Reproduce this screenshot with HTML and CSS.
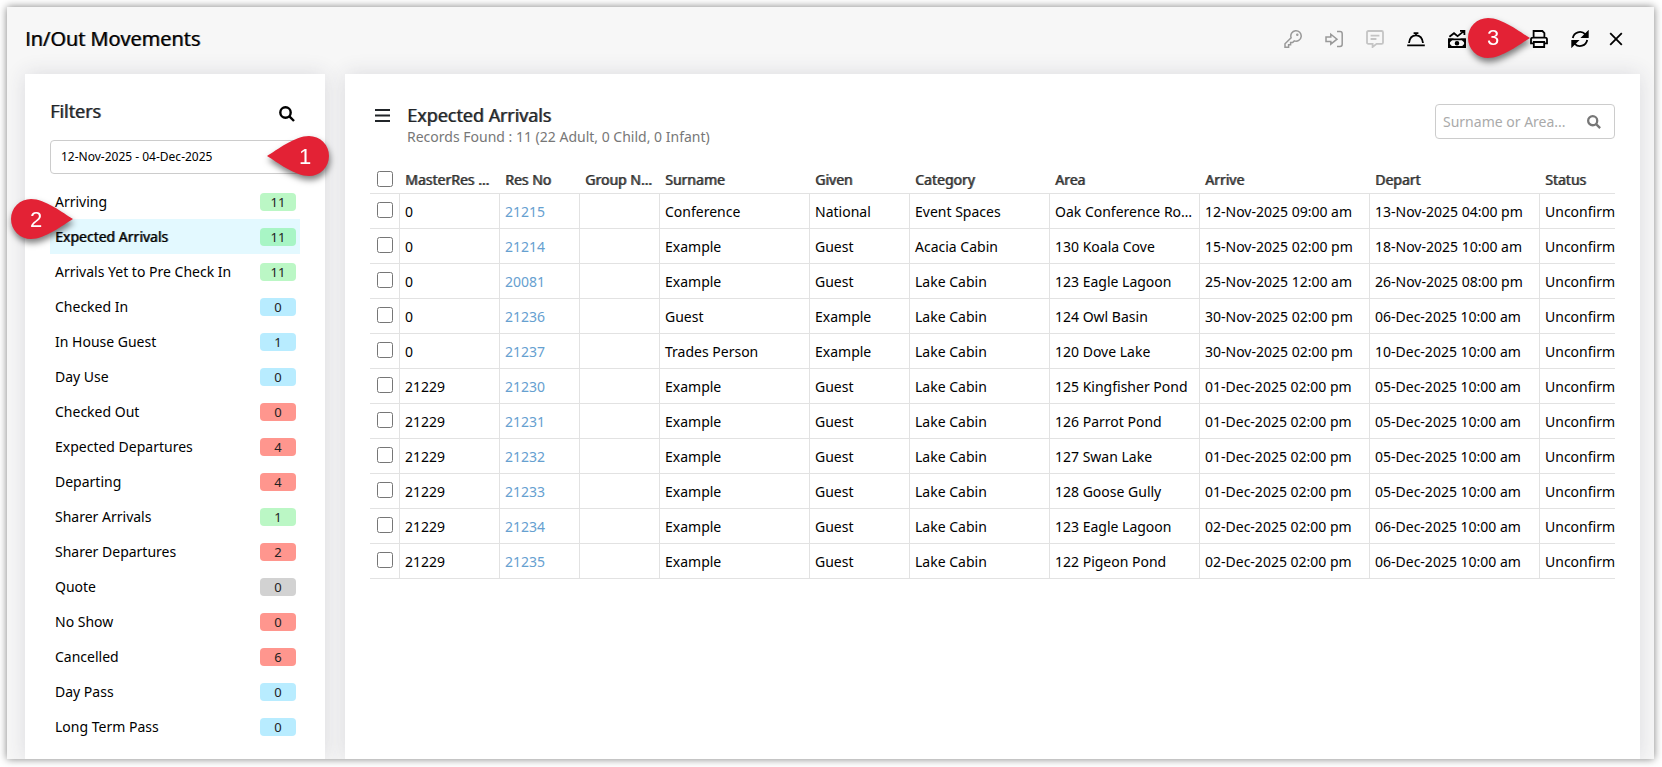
FILE: index.html
```
<!DOCTYPE html>
<html lang="en">
<head>
  <meta charset="UTF-8" />
  <title>In/Out Movements</title>
  <link rel="stylesheet" href="styles.css">
</head>
<body>
  <div class="window">
    <header class="topbar">
      <h1>In/Out Movements</h1>
      <div class="tools">
        <button class="tool off" aria-label="Key">
          <svg viewBox="0 0 18 18"><path d="M7.1 7.7A5.2 5.2 0 1 1 10.3 10.9L8.6 12.6H6.6V14.8H4.6V17.2H1V13.8Z"/><circle class="solid" cx="13.3" cy="4.8" r="0.5"/></svg>
        </button>
        <button class="tool off" aria-label="Check in">
          <svg viewBox="0 0 18 18"><path d="M1 7H5.8V4.2L12 9.2 5.8 14.2V11.4H1ZM12 1.6H15Q17.2 1.6 17.2 3.8V14.2Q17.2 16.4 15 16.4H12"/></svg>
        </button>
        <button class="tool dim" aria-label="Comments">
          <svg viewBox="0 0 18 18"><path d="M2.4 1H15.6Q17 1 17 2.4V12.4Q17 13.8 15.6 13.8H10.6L6.6 17V13.8H2.4Q1 13.8 1 12.4V2.4Q1 1 2.4 1ZM4.6 5.6H13.4M4.6 9H10.4"/></svg>
        </button>
        <button class="tool" aria-label="Concierge">
          <svg viewBox="0 0 18 18"><path d="M0.2 15.4H17.8M2 13C2.6 8.2 5.4 5.4 9 5.4S15.4 8.2 16 13M9 5.4V3.2M6.6 3.2H11.4"/></svg>
        </button>
        <button class="tool" aria-label="Revenue">
          <svg viewBox="0 0 18 18"><path d="M1.4 6.8 6 3.2 9.6 6.2 15.6 1.4M12 0.9H16.4V5M1 9.4H17V17H1Z"/><path class="solid" d="M1 9.4H3.6L1 12ZM17 9.4V12L14.4 9.4ZM1 17V14.4L3.6 17ZM17 17H14.4L17 14.4Z"/><circle class="solid" cx="9" cy="13.2" r="1.4"/></svg>
        </button>
        <button class="tool" aria-label="Export"></button>
        <button class="tool" aria-label="Print">
          <svg viewBox="0 0 18 18"><path d="M3.6 7.4V1H12.4L14.4 3V7.4M3.4 13.4H1V9.4Q1 7.6 2.8 7.6H15.2Q17 7.6 17 9.4V13.4H14.6M3.8 12H14.2V17H3.8Z"/></svg>
        </button>
        <button class="tool" aria-label="Refresh">
          <svg viewBox="0 0 18 18"><path d="M1.8 8A7.3 7.3 0 0 1 14.2 4.2L15.4 5.6M16.2 10A7.3 7.3 0 0 1 3.8 13.8L2.6 12.4"/><path class="solid" d="M16.8 2V7.2H11.6ZM1.2 16V10.8H6.4Z"/></svg>
        </button>
        <button class="tool close" aria-label="Close">
          <svg viewBox="0 0 14 14"><path d="M1.2 1.2 12.8 12.8M12.8 1.2 1.2 12.8"/></svg>
        </button>
      </div>
      <svg class="pin pin-3" viewBox="0 0 62 40"><path d="M62 20C52 14 34 0 20 0A20 20 0 0 0 20 40C34 40 52 26 62 20Z"/><text x="25" y="27">3</text></svg>
    </header>

    <div class="panels">
      <aside class="filters">
        <div class="filters-head">
          <h2>Filters</h2>
          <button class="search-btn" aria-label="Search filters">
            <svg viewBox="0 0 16 16"><circle cx="6.5" cy="6.5" r="5.2"/><path d="M10.4 10.4 15 15"/></svg>
          </button>
        </div>
        <input class="dates" type="text" aria-label="Date range" value="12-Nov-2025 - 04-Dec-2025">
        <ul class="filter-list" id="filterList"></ul>
        <svg class="pin pin-1" viewBox="0 0 62 40"><path d="M0 20C10 14 28 0 42 0A20 20 0 0 1 42 40C28 40 10 26 0 20Z"/><text x="38" y="28">1</text></svg>
        <svg class="pin pin-2" viewBox="0 0 62 40"><path d="M62 20C52 14 34 0 20 0A20 20 0 0 0 20 40C34 40 52 26 62 20Z"/><text x="25" y="28">2</text></svg>
      </aside>

      <main class="content">
        <div class="content-head">
          <button class="menu-btn" aria-label="Menu">
            <svg viewBox="0 0 15 13"><path d="M0 1H15M0 6.5H15M0 12H15"/></svg>
          </button>
          <div class="content-title">
            <h2>Expected Arrivals</h2>
            <p>Records Found : 11 (22 Adult, 0 Child, 0 Infant)</p>
          </div>
          <div class="search">
            <input type="text" aria-label="Surname or Area" placeholder="Surname or Area...">
            <svg viewBox="0 0 16 16"><circle cx="6.5" cy="6.5" r="5.2"/><path d="M10.4 10.4 15 15"/></svg>
          </div>
        </div>

        <div class="table-wrap">
          <table>
            <colgroup>
              <col class="w30"><col class="w100"><col class="w80"><col class="w80"><col class="w150"><col class="w100">
              <col class="w140"><col class="w150"><col class="w170"><col class="w170"><col class="w100">
            </colgroup>
            <thead>
              <tr>
                <th><input type="checkbox" aria-label="Select all"></th>
                <th>MasterRes No</th><th>Res No</th><th>Group Name</th><th>Surname</th><th>Given</th>
                <th>Category</th><th>Area</th><th>Arrive</th><th>Depart</th><th>Status</th>
              </tr>
            </thead>
            <tbody id="rows"></tbody>
          </table>
        </div>
      </main>
    </div>
  </div>

  <script src="script.js"></script>
</body>
</html>
```
FILE: styles.css
```
* {
  box-sizing: border-box;
}
body {
  margin: 0;
  padding: 7px 8px 8px 7px;
  height: 100vh;
  background: #fff;
  font-family: "Noto Sans", "Open Sans", sans-serif;
  font-size: 14px;
  color: #000;
}
h1, h2, p, ul {
  margin: 0;
  padding: 0;
}
button {
  padding: 0;
  border: none;
  background: none;
  cursor: pointer;
}
svg {
  display: block;
  fill: none;
  stroke: currentColor;
}
.solid {
  fill: currentColor;
}
.window {
  display: flex;
  flex-direction: column;
  height: 100%;
  background: #f7f7f7;
  box-shadow: 0 0 8px rgba(0, 0, 0, 0.5);
  overflow: hidden;
}

/* top bar */
.topbar {
  position: relative;
  z-index: 1;
  display: flex;
  align-items: center;
  justify-content: space-between;
  height: 67px;
  flex-shrink: 0;
  padding: 0 31px 3px 18px;
}
h1, h2, th, .filter-list .active {
  font-weight: 400;
  text-shadow: 1px 0 rgba(0, 0, 0, 0.6);
}
h1 {
  padding-bottom: 2px;
  font-family: "Open Sans", sans-serif;
  font-size: 20px;
}
.tools {
  display: flex;
  align-items: center;
  gap: 23px;
}
.tool {
  width: 18px;
  height: 18px;
  color: #000;
}
.tool svg {
  width: 18px;
  height: 18px;
  stroke-width: 1.8;
}
.tool.off {
  color: #999;
}
.tool.off svg {
  stroke-width: 1.5;
}
.tool.dim {
  color: #c4c4c4;
}
.tool.close, .tool.close svg {
  width: 14px;
  height: 14px;
}
.tool.close {
  margin-left: -3px;
}

/* panels */
.panels {
  display: flex;
  flex: 1;
  gap: 20px;
  min-height: 0;
  padding: 0 14px 0 18px;
}
.filters, .content {
  background: #fff;
  box-shadow: 0 0 20px rgba(50, 50, 80, 0.14);
}
.filters {
  width: 300px;
  flex-shrink: 0;
  padding: 24px 25px;
}
.filters-head {
  display: flex;
  align-items: center;
  justify-content: space-between;
  height: 28px;
  padding-right: 5px;
}
h2 {
  font-family: "Open Sans", sans-serif;
  font-size: 18px;
  color: #212529;
}
.filters h2 {
  padding-bottom: 2px;
}
.search-btn {
  margin-top: 4px;
}
.search-btn svg {
  width: 16px;
  height: 16px;
  stroke-width: 2.4;
}
.dates {
  display: block;
  width: 100%;
  height: 34px;
  margin: 14px 0 10px;
  padding: 0 10px 1px;
  border: 1px solid #ccc;
  border-radius: 4px;
  font-family: "Noto Sans", sans-serif;
  font-size: 12px;
}
.filter-list {
  list-style: none;
}
.filter-list a {
  display: flex;
  align-items: center;
  justify-content: space-between;
  height: 35px;
  padding: 0 4px 0 5px;
  color: #000;
  text-decoration: none;
}
.filter-list .active {
  background: #e3f9ff;
}
.badge {
  width: 36px;
  height: 18px;
  margin-top: 1px;
  border-radius: 4px;
  font-size: 13px;
  line-height: 19px;
  text-align: center;
  text-shadow: none;
  color: #222;
}
.green {
  background: #bbf7c5;
}
.active .green {
  background: #a8f5c5;
}
.blue {
  background: #b8ecff;
}
.red {
  background: #ff968e;
}
.grey {
  background: #d2d2d2;
}

/* main content */
.content {
  flex: 1;
  min-width: 0;
  padding: 29px 25px;
}
.content-head {
  display: flex;
  align-items: flex-start;
  height: 62px;
}
.menu-btn {
  margin: 6px 17px 0 5px;
  color: #212529;
}
.menu-btn svg {
  width: 15px;
  height: 13px;
  stroke-width: 2;
}
.content-title {
  flex: 1;
}
.content-title h2 {
  line-height: 24px;
}
.content-title p {
  line-height: 20px;
  color: #777;
}
.search {
  display: flex;
  align-items: center;
  width: 180px;
  height: 35px;
  margin-top: 1px;
  padding: 0 13px 0 7px;
  border: 1px solid #ccc;
  border-radius: 4px;
}
.search input {
  flex: 1;
  min-width: 0;
  padding: 0;
  border: none;
  outline: none;
  background: none;
  font-family: "Noto Sans", sans-serif;
  font-size: 14px;
}
.search input::placeholder {
  color: #aaa;
}
.search svg {
  width: 14px;
  height: 14px;
  color: #777;
  stroke-width: 2.6;
}

/* table */
.table-wrap {
  overflow: hidden;
}
table {
  width: 1270px;
  table-layout: fixed;
  border-collapse: separate;
  border-spacing: 0;
}
.w30 { width: 30px; }
.w80 { width: 80px; }
.w100 { width: 100px; }
.w140 { width: 140px; }
.w150 { width: 150px; }
.w170 { width: 170px; }
th, td {
  padding: 0 5px;
  border-bottom: 1px solid #e2e2e2;
  overflow: hidden;
  white-space: nowrap;
  text-overflow: ellipsis;
  text-align: left;
}
th {
  height: 29px;
  color: #333;
}
td {
  height: 35px;
  border-right: 1px solid #e2e2e2;
}
th:last-child, td:last-child {
  border-right: none;
  text-overflow: clip;
}
th:first-child, td:first-child {
  padding: 0 0 0 7px;
  text-overflow: clip;
}
td:first-child {
  padding-bottom: 2px;
}
table input {
  display: block;
  width: 16px;
  height: 16px;
  margin: 0;
}
td a {
  color: #66a0d0;
  text-decoration: none;
}

/* numbered callouts */
.pin {
  position: absolute;
  width: 62px;
  height: 40px;
  overflow: visible;
  stroke: none;
  fill: #e32235;
  filter: drop-shadow(1px 4px 3px rgba(0, 0, 0, 0.5));
}
.pin text {
  fill: #fff;
  font-family: "Liberation Sans", sans-serif;
  font-size: 22px;
  text-anchor: middle;
}
.pin-1 {
  top: 136px;
  left: 267px;
}
.pin-2 {
  top: 199px;
  left: 11px;
}
.pin-3 {
  top: 11px;
  right: 124px;
}
```
FILE: script.js
```
const filters = [
  ["Arriving", 11, "green"],
  ["Expected Arrivals", 11, "green"],
  ["Arrivals Yet to Pre Check In", 11, "green"],
  ["Checked In", 0, "blue"],
  ["In House Guest", 1, "blue"],
  ["Day Use", 0, "blue"],
  ["Checked Out", 0, "red"],
  ["Expected Departures", 4, "red"],
  ["Departing", 4, "red"],
  ["Sharer Arrivals", 1, "green"],
  ["Sharer Departures", 2, "red"],
  ["Quote", 0, "grey"],
  ["No Show", 0, "red"],
  ["Cancelled", 6, "red"],
  ["Day Pass", 0, "blue"],
  ["Long Term Pass", 0, "blue"]
];

const rows = [
  ["0", "21215", "", "Conference", "National", "Event Spaces", "Oak Conference Room", "12-Nov-2025 09:00 am", "13-Nov-2025 04:00 pm"],
  ["0", "21214", "", "Example", "Guest", "Acacia Cabin", "130 Koala Cove", "15-Nov-2025 02:00 pm", "18-Nov-2025 10:00 am"],
  ["0", "20081", "", "Example", "Guest", "Lake Cabin", "123 Eagle Lagoon", "25-Nov-2025 12:00 am", "26-Nov-2025 08:00 pm"],
  ["0", "21236", "", "Guest", "Example", "Lake Cabin", "124 Owl Basin", "30-Nov-2025 02:00 pm", "06-Dec-2025 10:00 am"],
  ["0", "21237", "", "Trades Person", "Example", "Lake Cabin", "120 Dove Lake", "30-Nov-2025 02:00 pm", "10-Dec-2025 10:00 am"],
  ["21229", "21230", "", "Example", "Guest", "Lake Cabin", "125 Kingfisher Pond", "01-Dec-2025 02:00 pm", "05-Dec-2025 10:00 am"],
  ["21229", "21231", "", "Example", "Guest", "Lake Cabin", "126 Parrot Pond", "01-Dec-2025 02:00 pm", "05-Dec-2025 10:00 am"],
  ["21229", "21232", "", "Example", "Guest", "Lake Cabin", "127 Swan Lake", "01-Dec-2025 02:00 pm", "05-Dec-2025 10:00 am"],
  ["21229", "21233", "", "Example", "Guest", "Lake Cabin", "128 Goose Gully", "01-Dec-2025 02:00 pm", "05-Dec-2025 10:00 am"],
  ["21229", "21234", "", "Example", "Guest", "Lake Cabin", "123 Eagle Lagoon", "02-Dec-2025 02:00 pm", "06-Dec-2025 10:00 am"],
  ["21229", "21235", "", "Example", "Guest", "Lake Cabin", "122 Pigeon Pond", "02-Dec-2025 02:00 pm", "06-Dec-2025 10:00 am"]
];

document.getElementById("filterList").innerHTML = filters.map(([name, count, color]) => `
  <li><a href="#" class="${name === "Expected Arrivals" ? "active" : ""}"><span>${name}</span><span class="badge ${color}">${count}</span></a></li>
`).join("");

document.getElementById("rows").innerHTML = rows.map(row => `
  <tr>
    <td><input type="checkbox" aria-label="Select ${row[1]}"></td>
    ${row.map((v, i) => i === 1 ? `<td><a href="#">${v}</a></td>` : `<td>${v}</td>`).join("")}
    <td>Unconfirmed</td>
  </tr>
`).join("");
```
